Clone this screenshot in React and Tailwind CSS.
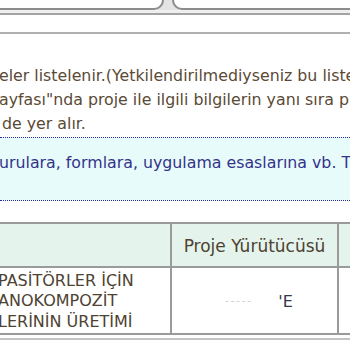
export default function App() {
  const font = { fontFamily: '"DejaVu Sans", sans-serif' };
  return (
    <div className="w-[350px] h-[350px] overflow-hidden bg-white" style={font}>
      {/* tabs */}
      <div className="flex h-[10px] bg-[#e4e4e4]">
        <div className="w-[164px] h-[10px] bg-white border-b-2 border-r-2 border-[#8c8c8c] rounded-br-[11px]" />
        <div className="w-[8px]" />
        <div className="flex-1 h-[10px] bg-white border-b-2 border-l-2 border-[#8c8c8c] rounded-bl-[13px]" />
      </div>
      <div className="h-[3px] bg-[#efefef]" />
      <div className="h-[2px] bg-[#a3a3a3]" />
      <div className="h-[17px]" />
      <div className="h-[2px] bg-[#b0b0b0]" />
      {/* text */}
      <div className="pt-[30px] pb-[1px] text-[15.8px] leading-[24px] text-[#5a4a35] whitespace-nowrap overflow-hidden">
        <div className="ml-[-1px]">eler listelenir.(Yetkilendirilmediyseniz bu liste</div>
        <div className="ml-[-1px]">ayfası"nda proje ile ilgili bilgilerin yanı sıra pr</div>
        <div className="ml-[2px]">de yer alır.</div>
      </div>
      {/* cyan info */}
      <div className="h-[64px] bg-[#e8fbfb] border-t border-b border-dotted border-[#2a2a9a] pt-[13px] whitespace-nowrap overflow-hidden text-[15.8px] leading-[24px] text-[#33338a]">
        <div className="ml-[-1px]">urulara, formlara, uygulama esaslarına vb. T</div>
      </div>
      <div className="h-[21px]" />
      {/* table */}
      <div className="border-t-2 border-b-2 border-[#9a9a9a] text-[#4e4232]">
        <div className="grid grid-cols-[170px_169px_1fr] h-[44px] bg-[#e4f4ec] border-b-2 border-[#9a9a9a]">
          <div />
          <div className="pt-[4px] border-l-2 border-r-2 border-[#9a9a9a] flex items-center justify-center text-[17px]">Proje Yürütücüsü</div>
          <div />
        </div>
        <div className="grid grid-cols-[170px_169px_1fr] h-[65px]">
          <div className="pt-[2px] flex flex-col justify-center text-[16px] leading-[20.5px] whitespace-nowrap overflow-hidden">
            <div className="ml-[-2px]">PASİTÖRLER İÇİN</div>
            <div className="ml-[-2px]">ANOKOMPOZİT</div>
            <div className="ml-[-2px]">LERİNİN ÜRETİMİ</div>
          </div>
          <div className="pt-[2px] border-l-2 border-r-2 border-[#9a9a9a] flex items-center">
            <span className="ml-[53px] text-[11px] text-[#cfcfcf] tracking-[1.5px]">-----</span>
            <span className="ml-[26px] text-[16px] text-[#33384a]">'E</span>
          </div>
          <div />
        </div>
      </div>
      <div className="h-[3px]" />
      <div className="h-[2px] bg-[#c4c4c4]" />
    </div>
  );
}
